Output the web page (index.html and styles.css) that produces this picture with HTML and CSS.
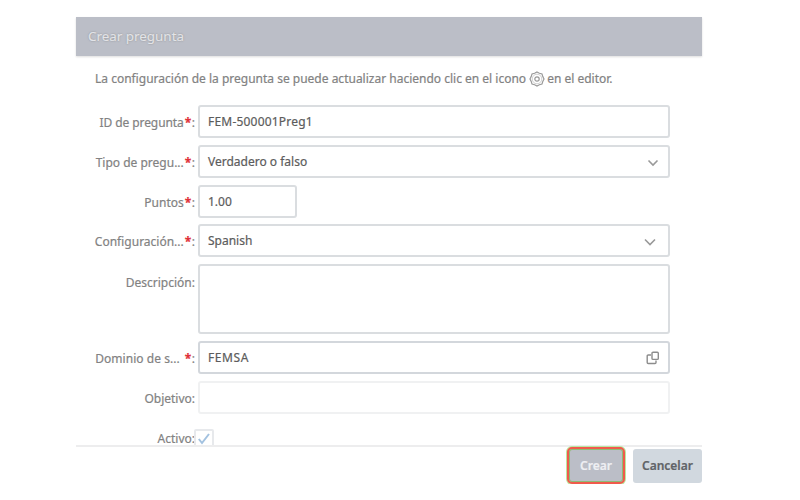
FILE: index.html
```html
<!DOCTYPE html>
<html lang="es">
<head>
<meta charset="utf-8">
<title>Crear pregunta</title>
<link rel="stylesheet" href="styles.css">
</head>
<body>
<main class="dialog">
  <header class="title"><span>Crear pregunta</span></header>
  <div class="content">
    <p class="note"><span>La configuración de la pregunta se puede actualizar haciendo clic en el icono</span><svg class="gear" viewBox="0 0 16 16"><path d="M8 1 10.4 2.2 13 3 13.8 5.6 15 8 13.8 10.4 13 13 10.4 13.8 8 15 5.6 13.8 3 13 2.2 10.4 1 8 2.2 5.6 3 3 5.6 2.2Z"/><circle class="ring" cx="8" cy="8" r="4.8"/><circle cx="8" cy="8" r="2.2"/></svg><span>en el editor.</span></p>
    <form class="form">
      <div class="row"><label><span class="narrow">ID de pregunta</span><b>*</b>:</label><div class="field"><span class="code">FEM-500001Preg1</span></div></div>
      <div class="row"><label><span>Tipo de pregu...</span><b>*</b>:</label><div class="field"><span>Verdadero o falso</span><svg class="chevron first" viewBox="0 0 12 8"><path d="M1.5 1.5 6 6 10.5 1.5"/></svg></div></div>
      <div class="row"><label><span>Puntos</span><b>*</b>:</label><div class="field short"><span>1.00</span></div></div>
      <div class="row language"><label><span>Configuración...</span><b>*</b>:</label><div class="field"><span>Spanish</span><svg class="chevron" viewBox="0 0 12 8"><path d="M1 1.5 6 6.5 11 1.5"/></svg></div></div>
      <div class="row tall"><label><span>Descripción</span>:</label><div class="field"></div></div>
      <div class="row"><label><span class="loose">Dominio de s...</span><b class="wide">*</b>:</label><div class="field strong"><span class="domain">FEMSA</span><svg class="help" viewBox="0 0 14 14"><path d="M5 4H2.2Q1.2 4 1.2 5V11.5Q1.2 12.5 2.2 12.5H9Q10 12.5 10 11.5V9.5"/><rect x="6" y="1.2" width="6.3" height="7.2" rx="1"/></svg></div></div>
      <div class="row"><label><span>Objetivo</span>:</label><div class="field light"></div></div>
      <div class="row"><label><span>Activo</span>:</label><div class="check"><svg viewBox="0 0 14 14"><path d="M1.8 7 5 11 12 2"/></svg></div></div>
    </form>
  </div>
  <footer class="actions"><button class="create">Crear</button><button class="cancel">Cancelar</button></footer>
</main>
</body>
</html>
```
FILE: styles.css
```css
* { box-sizing: border-box; }
body { margin: 0; background: #fff; font-family: "Noto Sans", "Open Sans", sans-serif; font-size: 12px; color: #828282; -webkit-text-stroke: 0.2px; overflow: hidden; }
.dialog { width: 626px; height: 467px; margin: 17px 0 0 76px; }
.title { height: 39px; padding-left: 12px; line-height: 38px; font-size: 13.4px; color: #e3e4e8; background: #bbbec7; text-shadow: 0 0 1.5px #777; box-shadow: 0 1px 2px #ddd; }
.content { height: 391px; overflow: hidden; border-bottom: 2px solid #ededee; }
.note { display: flex; align-items: center; height: 17px; margin: 14px 0 18px 19px; white-space: nowrap; }
.gear { width: 16px; height: 16px; margin: 1px 2px 0 3px; fill: none; stroke: #999; stroke-width: 1.2; }
.gear .ring { stroke: #bbb; stroke-width: .7; }
.form { display: flex; flex-direction: column; gap: 7px; margin: 0; }
.row { display: flex; height: 33px; }
.language { margin-top: -1px; }
.row label { width: 119px; margin-right: 3px; display: flex; justify-content: flex-end; line-height: 36px; white-space: nowrap; }
.row b { color: #df3038; width: 7px; margin-left: 1px; font-size: 12px; }
.row b.wide { margin-left: 5px; }
.narrow { letter-spacing: -0.07px; }
.loose { letter-spacing: 0.05px; }
.code { letter-spacing: 0.2px; }
.domain { letter-spacing: 0.6px; }
.field { width: 472px; padding: 0 9px 0 8px; border: 2px solid #dadde0; border-radius: 3px; display: flex; align-items: center; justify-content: space-between; color: #5c5c5c; line-height: 20px; white-space: nowrap; }
.short { width: 99px; }
.strong { border-color: #d3d7dc; }
.light { border-color: #f0f1f2; }
.tall { height: 70px; }
.tall label { line-height: 38px; }
.chevron { width: 12px; height: 8px; margin: 2px 3px 0 0; fill: none; stroke: #999; stroke-width: 1.6; }
.chevron.first { margin-right: 0; }
.help { width: 14px; height: 14px; margin-right: -1px; fill: none; stroke: #8c8c8c; stroke-width: 1.4; }
.check { width: 20px; height: 20px; margin: 8px 0 0 -4px; border: 2px solid #e7e9ec; border-radius: 2px; display: flex; align-items: center; justify-content: center; }
.check svg { width: 14px; height: 14px; flex: none; fill: none; stroke: #a3c2e0; stroke-width: 2; }
.actions { display: flex; justify-content: flex-end; gap: 8px; height: 37px; }
button { padding: 0; border: 0; font: 600 12px "Noto Sans", "Open Sans", sans-serif; white-space: nowrap; }
.create { width: 58px; height: 37px; color: #eeeff3; background: #bbbec7; border: 2px solid #f05a4c; border-radius: 5px; box-shadow: 0 0 0 1px #b9e8a0, inset 0 0 0 1px #8dbc75; }
.cancel { width: 69px; height: 34px; margin-top: 2px; padding-bottom: 2px; color: #606367; background: #d1d8df; border-radius: 3px; }
```
